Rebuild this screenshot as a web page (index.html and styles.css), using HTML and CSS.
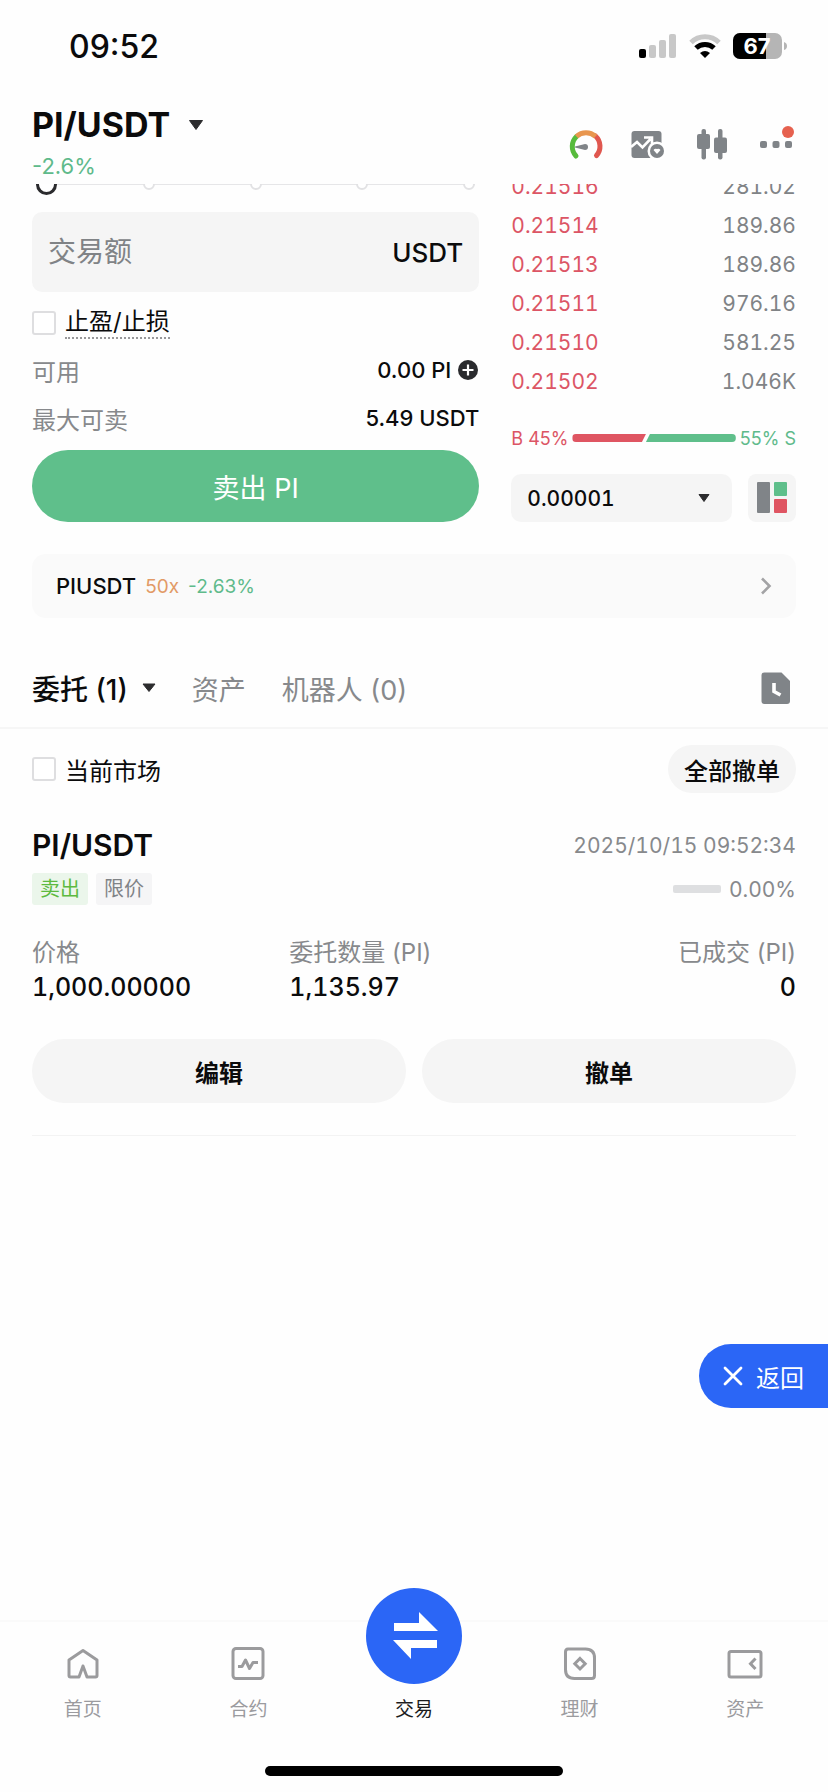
FILE: index.html
```html
<!DOCTYPE html>
<html lang="zh-CN">
<head>
<meta charset="utf-8">
<meta name="viewport" content="width=device-width, initial-scale=1">
<title>PI/USDT</title>
<link rel="stylesheet" href="styles.css">
</head>
<body>
<div class="status">
  <span class="status-time">09:52</span>
  <div class="status-icons">
    <svg width="38" height="26" viewBox="0 0 38 26" aria-hidden="true">
      <rect x="0" y="16" width="7" height="9" rx="2" fill="#000"/>
      <rect x="10" y="12" width="7" height="13" rx="2" fill="#c8c8c8"/>
      <rect x="20" y="7" width="7" height="18" rx="2" fill="#c8c8c8"/>
      <rect x="30" y="1" width="7" height="24" rx="2" fill="#c8c8c8"/>
    </svg>
    <svg width="32" height="26" viewBox="0 0 32 26" aria-hidden="true">
      <path d="M2 9.5a20 20 0 0 1 28 0" fill="none" stroke="#c8c8c8" stroke-width="5"/>
      <path d="M7 15a13 13 0 0 1 18 0" fill="none" stroke="#000" stroke-width="5"/>
      <path d="M11 20q5-4 10 0l-5 5z" fill="#000"/>
    </svg>
    <svg width="54" height="28" viewBox="0 0 54 28" role="img" aria-label="电量 67">
      <rect x="0" y="1" width="49" height="26" rx="7" fill="#b5b5b5"/>
      <path d="M7 1h26v26H7a7 7 0 0 1-7-7V8a7 7 0 0 1 7-7z" fill="#000"/>
      <path d="M51 10q3 1 3 4t-3 4z" fill="#b5b5b5"/>
      <text class="battery-text" x="24" y="22" text-anchor="middle">67</text>
    </svg>
  </div>
</div>

<header class="header">
  <div class="pair">
    <button class="pair-name" type="button">PI/USDT
      <svg width="16" height="12" viewBox="0 0 16 12" aria-hidden="true"><path d="M1.5 1.5h13L8 10.5z" fill="#2c2c2e" stroke="#2c2c2e" stroke-linejoin="round"/></svg>
    </button>
    <span class="pair-change up">-2.6%</span>
  </div>
  <div class="tools">
    <button class="tool" type="button" aria-label="情绪指数">
      <svg width="40" height="40" viewBox="0 0 40 40" fill="none" stroke-width="5">
        <path d="M32.5 31.5A14 14 0 0 0 31.5 12" stroke="#e0574f" stroke-linecap="round"/>
        <path d="M12 32A14 14 0 0 1 12.5 12.5" stroke="#57bb3c" stroke-linecap="round"/>
        <path d="M12.5 12.5A14 14 0 0 1 31.5 12.5" stroke="#e8964f"/>
        <path d="M11 22.5l10-2.500a3 3 0 1 1 0 6l-10-2.500z" fill="#808488"/>
      </svg>
    </button>
    <button class="tool" type="button" aria-label="图表">
      <svg width="40" height="40" viewBox="0 0 40 40">
        <rect x="3.5" y="7" width="30" height="27" rx="3" fill="#808488"/>
        <path d="M3 23l6-5 5.5 5.5L22.5 15M16 13.5h8V20" fill="none" stroke="#fff" stroke-width="2.6"/>
        <circle cx="29" cy="27" r="9.5" fill="#fff"/>
        <circle cx="29" cy="27" r="7" fill="#808488"/>
        <path d="M25.5 26q1.500-2 3.500-1 2-1 3.500 1L29 30z" fill="#fff"/>
      </svg>
    </button>
    <button class="tool" type="button" aria-label="K线">
      <svg width="40" height="40" viewBox="0 0 40 40" fill="#808488">
        <rect x="5" y="10" width="13" height="15" rx="2"/><rect x="9.5" y="5" width="4.5" height="30.5" rx="2"/>
        <rect x="22" y="13.5" width="13" height="15.5" rx="2"/><rect x="26" y="5" width="4.5" height="30.5" rx="2"/>
      </svg>
    </button>
    <button class="tool" type="button" aria-label="更多">
      <svg width="40" height="40" viewBox="0 0 40 40" fill="#808488">
        <rect x="4" y="17" width="7" height="7" rx="2"/><rect x="16.5" y="17" width="7" height="7" rx="2"/><rect x="29" y="17" width="7" height="7" rx="2"/>
        <circle cx="32" cy="8" r="6" fill="#e6614f"/>
      </svg>
    </button>
  </div>
</header>

<main class="main">
  <div class="trade">
    <form class="form">
      <div class="slider">
        <div class="stops"><i></i><i></i><i></i><i></i><i></i></div>
        <input class="range" type="range" min="0" max="100" step="25" value="0" aria-label="数量比例">
      </div>
      <div class="field">
        <input class="field-input" id="amount" type="text" placeholder="交易额" aria-label="交易额">
        <label class="field-unit" for="amount">USDT</label>
      </div>
      <label class="check"><input type="checkbox"><span class="dotted">止盈/止损</span></label>
      <div class="row"><span class="muted">可用</span>
        <span class="row-value">0.00 PI
          <svg width="22" height="22" viewBox="0 0 22 22" aria-hidden="true"><circle cx="11" cy="11" r="10" fill="#2a2b2e"/><path d="M11 5.5v11M5.5 11h11" stroke="#fff" stroke-width="2.2"/></svg>
        </span>
      </div>
      <div class="row"><span class="muted">最大可卖</span><span class="row-value">5.49 USDT</span></div>
      <button class="sell" type="button">卖出 PI</button>
    </form>

    <section class="book" aria-label="盘口">
      <table class="asks">
        <tbody>
        <tr><td>0.21516</td><td>281.02</td></tr>
        <tr><td>0.21514</td><td>189.86</td></tr>
        <tr><td>0.21513</td><td>189.86</td></tr>
        <tr><td>0.21511</td><td>976.16</td></tr>
        <tr><td>0.21510</td><td>581.25</td></tr>
        <tr><td>0.21502</td><td>1.046K</td></tr>
        </tbody>
      </table>
      <div class="ratio">
        <span class="down">B 45%</span>
        <div class="ratio-bar"><span class="ratio-buy" style="flex-grow:45"></span><span class="ratio-sell" style="flex-grow:55"></span></div>
        <span class="up">55% S</span>
      </div>
      <div class="book-tools">
        <div class="step">
          <select class="step-select" aria-label="价格精度"><option>0.00001</option></select>
          <svg class="step-caret" width="12" height="10" viewBox="0 0 12 10" aria-hidden="true"><path d="M1 1.5h10L6 8.5z" fill="#2c2c2e" stroke="#2c2c2e" stroke-linejoin="round"/></svg>
        </div>
        <button class="layout" type="button" aria-label="盘口布局">
          <svg width="48" height="48" viewBox="0 0 48 48"><rect x="9" y="8" width="13" height="31" rx="1" fill="#808488"/><rect x="26" y="8" width="13" height="14" rx="1" fill="#5fbf8b"/><rect x="26" y="25" width="13" height="14" rx="1" fill="#df5562"/></svg>
        </button>
      </div>
    </section>
  </div>

  <a class="banner" href="#">
    <span class="banner-name">PIUSDT</span><span class="banner-lever">50x</span><span class="banner-change up">-2.63%</span>
    <svg class="banner-arrow" width="12" height="18" viewBox="0 0 12 18" aria-hidden="true"><path d="M2 1.5L9.5 9 2 16.5" fill="none" stroke="#a3a3a5" stroke-width="2.6"/></svg>
  </a>

  <nav class="tabs">
    <button class="tab tab-on" type="button">委托 (1)
      <svg width="14" height="12" viewBox="0 0 14 12" aria-hidden="true"><path d="M1 2h12L7 9.5z" fill="#2c2c2e" stroke="#2c2c2e" stroke-linejoin="round"/></svg>
    </button>
    <button class="tab" type="button">资产</button>
    <button class="tab" type="button">机器人 (0)</button>
    <button class="history" type="button" aria-label="历史">
      <svg width="40" height="40" viewBox="0 0 40 40"><path d="M8.5 4.5h17L34 13v20q0 3-3 3H8.5q-3 0-3-3V7.5q0-3 3-3z" fill="#808488"/><path d="M18 15v8.5l6.5 3.5" fill="none" stroke="#fff" stroke-width="3.6"/></svg>
    </button>
  </nav>

  <section class="orders">
    <div class="filter">
      <label class="check"><input type="checkbox"><span>当前市场</span></label>
      <button class="cancel-all" type="button">全部撤单</button>
    </div>
    <article class="order">
      <div class="order-head"><h2 class="order-pair">PI/USDT</h2><time class="order-text">2025/10/15 09:52:34</time></div>
      <div class="order-sub">
        <span class="tag tag-sell">卖出</span><span class="tag">限价</span>
        <span class="progress"></span><span class="order-text">0.00%</span>
      </div>
      <dl class="facts">
        <div><dt>价格</dt><dd>1,000.00000</dd></div>
        <div><dt>委托数量 (PI)</dt><dd>1,135.97</dd></div>
        <div class="fact-end"><dt>已成交 (PI)</dt><dd>0</dd></div>
      </dl>
      <div class="actions">
        <button class="action" type="button">编辑</button>
        <button class="action" type="button">撤单</button>
      </div>
    </article>
  </section>
</main>

<button class="back" type="button">
  <svg width="20" height="20" viewBox="0 0 20 20" aria-hidden="true"><path d="M2 2l16 16M18 2L2 18" stroke="#fff" stroke-width="2.8" stroke-linecap="round"/></svg>
  返回
</button>

<footer class="footer">
  <nav class="nav">
    <a class="nav-item" href="#">
      <svg width="40" height="40" viewBox="0 0 40 40" fill="none" stroke="#9b9b9d" stroke-width="3" stroke-linejoin="round"><path d="M20 6.5L34 16v15.5q0 1.500-1.500 1.500H24l-4-11-4 11H7.500Q6 33 6 31.500V16z"/></svg>
      首页</a>
    <a class="nav-item" href="#">
      <svg width="40" height="40" viewBox="0 0 40 40" fill="none" stroke="#9b9b9d" stroke-width="3"><rect x="5" y="4.5" width="30" height="30" rx="3"/><path d="M10 22.5h4l3.500-6.500 4 8.500 3.500-6h5" stroke-linejoin="round"/></svg>
      合约</a>
    <a class="nav-item nav-on" href="#">
      <svg class="nav-swap" width="96" height="96" viewBox="0 0 96 96"><circle cx="48" cy="48" r="48" fill="#2b66f6"/><path d="M28 35h25V24l19 19H28zM71 60H45v11L27 52h44z" fill="#fff"/></svg>
      交易</a>
    <a class="nav-item" href="#">
      <svg width="40" height="40" viewBox="0 0 40 40" fill="none" stroke="#9b9b9d" stroke-width="3"><path d="M8 5h17.500q9 0 9 9v17.500q0 3-3 3H14.500q-9 0-9-9V8q0-3 2.500-3z"/><path d="M20 14.500l5.200 5.300L20 25l-5.200-5.200z"/></svg>
      理财</a>
    <a class="nav-item" href="#">
      <svg width="40" height="40" viewBox="0 0 40 40" fill="none" stroke="#9b9b9d" stroke-width="3"><rect x="4" y="7.5" width="32" height="25.5" rx="2"/><path d="M30.5 14.500l-5 5.200 5 5.300"/></svg>
      资产</a>
  </nav>
  <div class="home-bar"></div>
</footer>
</body>
</html>
```

FILE: styles.css
```css
* { box-sizing: border-box; }

body {
  margin: 0;
  min-height: 100vh;
  display: flex;
  flex-direction: column;
  background: #fefefe;
  color: #0b0b0c;
  font-family: Inter, "Noto Sans CJK SC", sans-serif;
  font-size: 22px;
}

button, input, select {
  margin: 0;
  padding: 0;
  border: 0;
  background: none;
  color: inherit;
  font: inherit;
}

svg { display: block; flex: none; }
a { color: inherit; text-decoration: none; }

.up { color: #5fba8b; }
.down { color: #dc5565; }
.muted { color: #87898c; }

/* Status bar */
.status {
  display: flex;
  align-items: center;
  justify-content: space-between;
  height: 92px;
  padding: 0 41px 0 69px;
}
.status-time { font-size: 32px; font-weight: 500; }
.status-icons { display: flex; align-items: center; gap: 12px; }
.battery-text { fill: #fff; font-size: 22px; font-weight: 700; }

/* Header */
.header {
  display: flex;
  align-items: center;
  justify-content: space-between;
  padding: 12px 32px 0;
}
.pair { display: flex; flex-direction: column; align-items: flex-start; gap: 8px; padding-bottom: 6px; }
.pair-name {
  display: flex;
  align-items: center;
  gap: 18px;
  font-size: 34px;
  font-weight: 700;
  line-height: 42px;
}
.pair-change { line-height: 24px; }
.tools { display: flex; gap: 24px; }
.tool { width: 40px; height: 40px; }

/* Trade area: the top slips under the header */
.main { flex: 1; overflow: hidden; }
.trade {
  display: grid;
  grid-template-columns: minmax(0, 11fr) minmax(0, 7fr);
  gap: 32px;
  padding: 0 32px;
}
.form { display: flex; flex-direction: column; gap: 16px; margin-top: -12px; }

.slider { display: grid; align-items: center; height: 24px; padding: 0 4px; }
.slider > * { grid-area: 1 / 1; }
.stops {
  display: flex;
  justify-content: space-between;
  align-items: center;
  background: linear-gradient(#e6e6e8, #e6e6e8) center / 100% 2px no-repeat;
}
.stops i { width: 12px; height: 12px; border: 2px solid #e2e2e4; border-radius: 50%; background: #fff; }
.range { width: 100%; height: 22px; appearance: none; }
.range::-webkit-slider-thumb {
  appearance: none;
  width: 21px;
  height: 21px;
  border: 3px solid #2b2b2e;
  border-radius: 50%;
  background: #fff;
}

.field {
  display: flex;
  align-items: center;
  height: 80px;
  padding: 0 16px;
  border-radius: 10px;
  background: #f5f5f5;
}
.field-input { flex: 1; min-width: 0; font-size: 28px; outline: 0; }
.field-input::placeholder { color: #808386; opacity: 1; }
.field-unit { font-size: 26px; font-weight: 500; }

.check { display: flex; align-items: center; gap: 9px; height: 30px; font-size: 24px; }
.check input {
  width: 24px;
  height: 24px;
  border: 2px solid #dedee0;
  border-radius: 3px;
  background: #fff;
  appearance: none;
}
.dotted { line-height: 30px; border-bottom: 2px dotted #98989a; }

.row { display: flex; align-items: center; justify-content: space-between; height: 32px; }
.row .muted { font-size: 24px; }
.row-value { display: flex; align-items: center; gap: 6px; font-weight: 500; }

.sell {
  height: 72px;
  border-radius: 36px;
  background: #5fbf8b;
  color: #fff;
  font-size: 27px;
}

/* Order book */
.asks { width: 100%; margin-top: -17px; border-collapse: collapse; font-size: 21px; font-variant-numeric: tabular-nums; }
.asks td { height: 39px; padding: 0; color: #dc5565; }
.asks td + td { color: #808386; text-align: right; }

.ratio { display: flex; align-items: center; gap: 4px; height: 24px; margin-top: 25px; font-size: 18px; }
.ratio-bar { display: flex; flex: 1; height: 8px; }
.ratio-buy { border-radius: 4px 0 0 4px; background: #df5562; clip-path: polygon(0 0, 100% 0, calc(100% - 4px) 100%, 0 100%); }
.ratio-sell { border-radius: 0 4px 4px 0; background: #5fbf8b; clip-path: polygon(4px 0, 100% 0, 100% 100%, 0 100%); }

.book-tools { display: flex; gap: 16px; margin-top: 24px; }
.step { display: grid; flex: 1; align-items: center; }
.step > * { grid-area: 1 / 1; }
.step-select {
  height: 48px;
  padding: 0 16px;
  border-radius: 10px;
  background: #f5f5f5;
  font-size: 21px;
  font-weight: 500;
  font-variant-numeric: tabular-nums;
  appearance: none;
}
.step-caret { justify-self: end; margin-right: 22px; pointer-events: none; }
.layout { width: 48px; height: 48px; border-radius: 8px; background: #f5f5f5; }

/* Futures banner */
.banner {
  display: flex;
  align-items: center;
  gap: 9px;
  height: 64px;
  margin: 32px 32px 0;
  padding: 0 24px;
  border-radius: 14px;
  background: #fafafa;
}
.banner-name { font-weight: 500; }
.banner-lever { color: #e29a66; font-size: 19px; }
.banner-change { font-size: 19px; }
.banner-arrow { margin-left: auto; }

/* Tabs */
.tabs {
  display: flex;
  align-items: center;
  gap: 36px;
  height: 80px;
  margin-top: 31px;
  padding: 0 32px;
  border-bottom: 2px solid #f6f6f6;
}
.tab { display: flex; align-items: center; gap: 14px; color: #87898c; font-size: 27px; }
.tab-on { color: #0b0b0c; font-size: 28px; font-weight: 500; }
.history { width: 40px; height: 40px; margin-left: auto; }

/* Open orders */
.orders { padding: 16px 32px 0; }
.filter { display: flex; align-items: center; justify-content: space-between; }
.cancel-all {
  height: 48px;
  padding: 0 16px;
  border-radius: 24px;
  background: #f5f5f5;
  font-size: 24px;
  font-weight: 500;
}
.order { padding: 32px 0; border-bottom: 1px solid #f3f3f3; }
.order-head { display: flex; align-items: center; justify-content: space-between; height: 40px; }
.order-pair { margin: 0; font-size: 30px; font-weight: 600; }
.order-text { color: #87898c; font-size: 21px; font-variant-numeric: tabular-nums; }
.order-sub { display: flex; align-items: center; gap: 8px; margin-top: 8px; }
.tag {
  padding: 0 8px;
  border-radius: 3px;
  background: #f5f5f6;
  color: #808386;
  font-size: 20px;
  line-height: 32px;
}
.tag-sell { background: #ebf6eb; color: #5cba40; }
.progress { width: 48px; height: 8px; margin-left: auto; border-radius: 2px; background: #dedfe1; }

.facts { display: grid; grid-template-columns: repeat(3, 1fr); gap: 8px; margin: 31px 0 0; }
.facts dt { color: #87898c; font-size: 24px; line-height: 34px; }
.facts dd { margin: 0; font-size: 25px; font-weight: 500; font-variant-numeric: tabular-nums; line-height: 34px; }
.fact-end { text-align: right; }

.actions { display: grid; grid-template-columns: 1fr 1fr; gap: 16px; margin-top: 35px; }
.action { height: 64px; border-radius: 32px; background: #f5f5f5; font-size: 24px; font-weight: 700; }

/* Floating return button */
.back {
  position: fixed;
  right: 0;
  bottom: 384px;
  display: flex;
  align-items: center;
  gap: 13px;
  height: 64px;
  padding: 0 24px;
  border-radius: 32px 0 0 32px;
  background: #2b66f6;
  color: #fff;
  font-size: 24px;
}

/* Bottom navigation */
.footer { padding-bottom: 16px; border-top: 2px solid #fafafa; }
.nav { display: grid; grid-template-columns: repeat(5, 1fr); align-items: end; margin-top: -34px; }
.nav-item {
  display: flex;
  flex-direction: column;
  align-items: center;
  gap: 12px;
  color: #9b9b9f;
  font-size: 19px;
  line-height: 28px;
}
.nav-on { color: #1c1c1e; }
.home-bar { width: 36%; height: 10px; margin: 42px auto 0; border-radius: 5px; background: #000; }
```
